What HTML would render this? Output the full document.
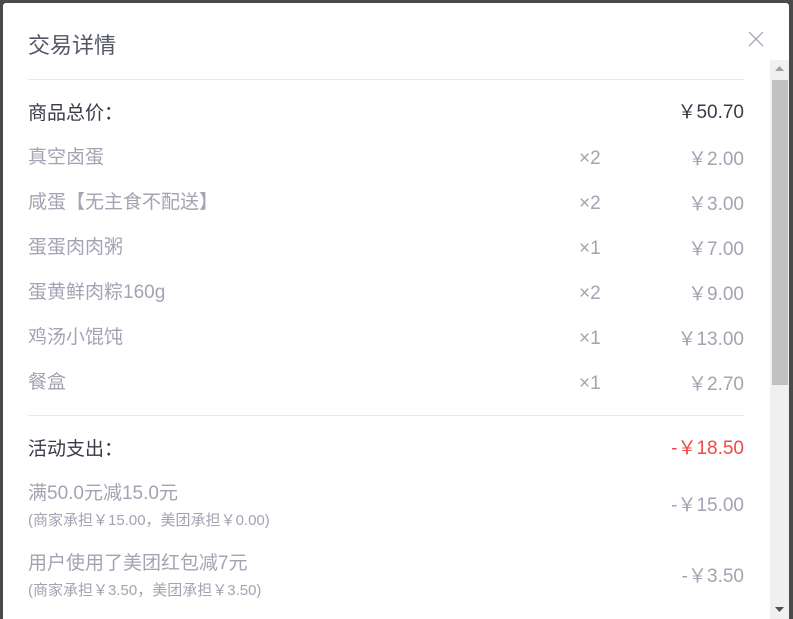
<!DOCTYPE html>
<html><head><meta charset="utf-8"><style>
*{margin:0;padding:0;box-sizing:border-box}
body{width:793px;height:619px;background:#4a4a4a;overflow:hidden;position:relative;font-family:"Liberation Sans","Noto Sans CJK SC",sans-serif}
.m{position:absolute;left:3px;top:3px;width:786px;height:616px;background:#fff;border-radius:3px 3px 0 0}
.t{position:absolute;left:28px;top:28px;font-size:22px;color:#555766}
.x{position:absolute;left:748px;top:31px}
.hr{position:absolute;left:28px;width:716px;height:1px;background:#e8e8ec}
.r{position:absolute;left:28px;width:716px;font-size:19px;color:#a3a3b3;height:24px;line-height:24px}
.r .q{position:absolute;left:551px;top:1px}
.r .a{position:absolute;right:0;top:0}
.r .n{position:relative;top:1px}
.y{font-family:"Noto Sans CJK SC",sans-serif}
.h{color:#3a3a48}
.red{color:#f04848}
.s{position:absolute;left:28px;font-size:15px;color:#a3a3b3}
.sb{position:absolute;left:770px;top:60px;width:19px;height:559px;background:#f0f0f0}
.th{position:absolute;left:772px;top:80px;width:16px;height:305px;background:#c1c1c1}
</style></head><body>
<div class="m"></div>
<div class="t">交易详情</div>
<svg class="x" width="16" height="16" viewBox="0 0 16 16"><path d="M1 1L15 15M15 1L1 15" stroke="#a8a8b4" stroke-width="1.3"/></svg>
<div class="hr" style="top:79px"></div>
<div class="r h" style="top:100px">商品总价<span class="y">：</span><span class="a" style="top:-1px"><span class="y">￥</span>50.70</span></div>
<div class="r" style="top:146px">真空卤蛋<span class="q">×2</span><span class="a"><span class="y">￥</span>2.00</span></div>
<div class="r" style="top:191px">咸蛋【无主食不配送】<span class="q">×2</span><span class="a"><span class="y">￥</span>3.00</span></div>
<div class="r" style="top:236px">蛋蛋肉肉粥<span class="q">×1</span><span class="a"><span class="y">￥</span>7.00</span></div>
<div class="r" style="top:281px">蛋黄鲜肉粽160g<span class="q">×2</span><span class="a"><span class="y">￥</span>9.00</span></div>
<div class="r" style="top:326px">鸡汤小馄饨<span class="q">×1</span><span class="a"><span class="y">￥</span>13.00</span></div>
<div class="r" style="top:371px">餐盒<span class="q">×1</span><span class="a"><span class="y">￥</span>2.70</span></div>
<div class="hr" style="top:415px"></div>
<div class="r h" style="top:436px">活动支出<span class="y">：</span><span class="a red" style="top:-1px">-<span class="y">￥</span>18.50</span></div>
<div class="r" style="top:482px">满50.0元减15.0元</div>
<div class="r" style="top:492px"><span class="a">-<span class="y">￥</span>15.00</span></div>
<div class="s" style="top:509px">(商家承担<span class="y">￥</span>15.00，美团承担<span class="y">￥</span>0.00)</div>
<div class="r" style="top:552px">用户使用了美团红包减7元</div>
<div class="r" style="top:563px"><span class="a">-<span class="y">￥</span>3.50</span></div>
<div class="s" style="top:579px">(商家承担<span class="y">￥</span>3.50，美团承担<span class="y">￥</span>3.50)</div>
<div class="sb"></div><div class="th"></div>
<svg style="position:absolute;left:775px;top:66px" width="9" height="6"><path d="M0 5L4.5 0L9 5Z" fill="#a0a0a0"/></svg>
<svg style="position:absolute;left:775px;top:607px" width="9" height="6"><path d="M0 0L4.5 5L9 0Z" fill="#505050"/></svg>
</body></html>
